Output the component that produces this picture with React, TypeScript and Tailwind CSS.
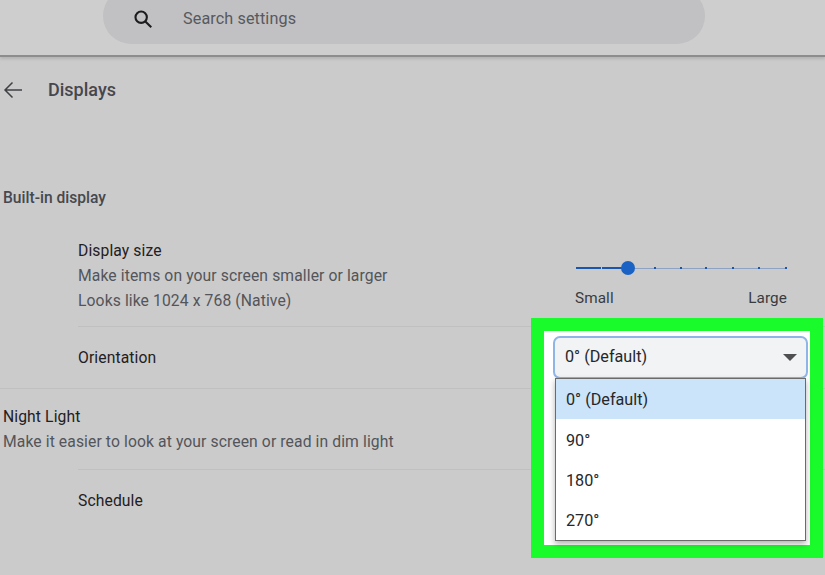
export default function App() {
  const ticks = [654, 680, 705, 732, 758, 785];
  return (
    <div className="relative w-[825px] h-[575px] overflow-hidden bg-[#cbcbcb] font-['Roboto',sans-serif]">
      <header className="flex h-[57px] bg-[#cecece] border-b-[2px] border-[#8d8d8d] shadow-[0_2px_3px_rgba(0,0,0,0.12)] pl-[103px]">
        <div className="w-[602px] h-[56px] -mt-[12px] rounded-full bg-[#c1c1c3] flex items-center pl-[29px]">
          <svg width="22" height="22" viewBox="0 0 24 24" fill="none" stroke="#1c1c1e" strokeWidth="2.3" className="mt-[6px]">
            <circle cx="10" cy="10" r="6.2" />
            <path d="M14.6 14.6L21 21" />
          </svg>
          <span className="ml-[29px] mt-[7px] text-[16.2px] tracking-[0.1px] text-[#57595e]">Search settings</span>
        </div>
      </header>

      <div className="h-[66px] flex items-center pl-[3px]">
        <svg width="20" height="20" viewBox="0 0 20 20" fill="none" stroke="#3f4145" strokeWidth="1.5">
          <path d="M19 10H2M9.5 2.5L2 10l7.5 7.5" />
        </svg>
        <h1 className="ml-[25px] -mt-[1px] text-[18px] font-medium text-[#45474d]">Displays</h1>
      </div>

      <h2 className="mt-[64px] pl-[3px] h-[22px] leading-[22px] text-[15.6px] font-medium text-[#46484e]">Built-in display</h2>

      <section className="mt-[29px] ml-[78px]">
        <div className="flex h-[89px] border-b border-[#c0c0c0]">
          <div className="flex-1 text-[15.7px] leading-[25px]">
            <div className="text-[#1f2023] tracking-[0.1px]">Display size</div>
            <div className="text-[#53555a] tracking-[0.1px]">Make items on your screen smaller or larger</div>
            <div className="text-[#53555a] tracking-[0.1px]">Looks like 1024 x 768 (Native)</div>
          </div>
          <div className="w-[212px] mr-[38px] mt-[20px]">
            <div className="relative h-[20px] ml-[1px] w-[210px]">
              <div className="absolute left-0 top-[9px] w-[25px] h-[2px] bg-[#1a56b0]" />
              <div className="absolute left-[26px] top-[9px] w-[26px] h-[2px] bg-[#1a56b0]" />
              <div className="absolute left-[52px] top-[9.5px] right-0 h-[1px] bg-[#8ea3c4]" />
              {ticks.map((t) => (
                <span key={t} className="absolute top-[9px] w-[2px] h-[2px] bg-[#1a56b0]" style={{ left: t - 576 }} />
              ))}
              <div className="absolute left-[45px] top-[3px] w-[14px] h-[14px] rounded-full bg-[#1a62c4]" />
            </div>
            <div className="flex justify-between mt-[10px] text-[15.3px] leading-[20px] text-[#3a3b3f] tracking-[0.1px]">
              <span>Small</span>
              <span>Large</span>
            </div>
          </div>
        </div>
        <div className="h-[61px] flex items-center text-[15.7px] text-[#1f2023] tracking-[0.1px]">Orientation</div>
      </section>

      <section className="border-t border-[#c0c0c0] pt-[15px] pl-[3px] h-[81px] text-[15.7px] leading-[25px] tracking-[0.1px]">
        <div className="text-[#1f2023]">Night Light</div>
        <div className="text-[#53555a]">Make it easier to look at your screen or read in dim light</div>
      </section>

      <section className="ml-[78px] border-t border-[#c0c0c0] h-[62px] flex items-center text-[15.7px] text-[#1f2023] tracking-[0.1px]">
        Schedule
      </section>

      {/* highlighted callout above the page */}
      <div className="absolute left-[531px] top-[318px] w-[292px] h-[240px] border-[13px] border-[#1afb2c] bg-white">
        <div className="absolute left-[9px] top-[5px] w-[255px] h-[43px] rounded-[7px] border-2 border-[#8fb4e6] bg-[#f1f3f5] flex items-center justify-between pl-[10px] pr-[9px] text-[16.2px] text-[#26272a]">
          <span>0° (Default)</span>
          <span className="w-0 h-0 border-l-[7px] border-r-[7px] border-t-[7px] border-l-transparent border-r-transparent border-t-[#4f4f52]" />
        </div>
        <div className="absolute left-[11px] top-[47px] w-[251px] h-[163px] border border-[#6b6b6b] bg-white shadow-[0_3px_6px_rgba(0,0,0,0.3)] text-[16.2px] text-[#26272a]">
          <div className="h-[40px] flex items-center pl-[10px] pt-[2px] bg-[#cce4f9]">0° (Default)</div>
          <div className="h-[40px] flex items-center pl-[10px] pt-[5px]">90°</div>
          <div className="h-[40px] flex items-center pl-[10px] pt-[5px]">180°</div>
          <div className="h-[40px] flex items-center pl-[10px] pt-[5px]">270°</div>
        </div>
      </div>
    </div>
  );
}
